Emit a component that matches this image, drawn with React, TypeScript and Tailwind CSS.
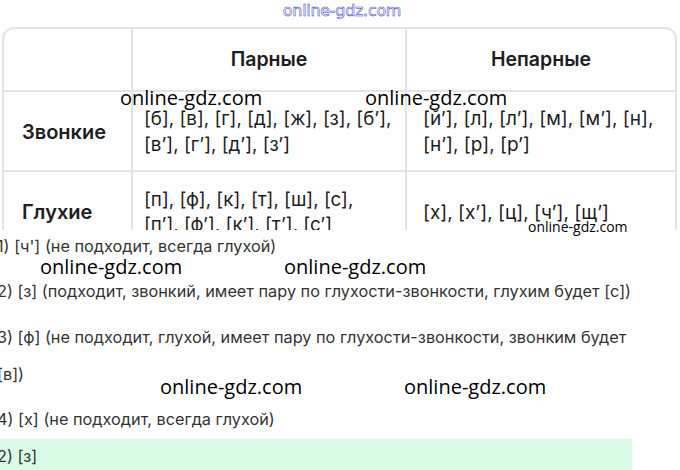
// @ts-nocheck
import React from "react";

const wm = "absolute text-black leading-none font-['Open_Sans',sans-serif] whitespace-nowrap";

const App = () => {
  const cell = "border-[#e4e4e4] flex items-center";
  return (
    <div className="relative w-[680px] h-[470px] bg-white overflow-hidden font-['Inter',sans-serif]">
      <div className="h-[27px] flex justify-center pt-[3px]">
        <span className="text-[16px] leading-[16px] text-transparent [-webkit-text-stroke:0.5px_#3535c8] font-['DejaVu_Sans',sans-serif] tracking-[-0.3px] ml-[4px]">online-gdz.com</span>
      </div>

      <div className="h-[203px] overflow-hidden px-[2px]">
        <div className="w-[675px] border-2 border-[#e4e4e4] rounded-[12px] grid grid-cols-[129px_274px_1fr] text-[#1d1d1f]">
          <div className={`${cell} h-[63px] border-r-2 border-b-2`}></div>
          <div className={`${cell} h-[63px] border-r-2 border-b-2 justify-center text-[19.5px] font-semibold`}>Парные</div>
          <div className={`${cell} h-[63px] border-b-2 justify-center text-[19.5px] font-semibold`}>Непарные</div>

          <div className={`${cell} h-[80px] border-r-2 border-b-2 pl-[18px] pt-[2px] text-[20px] font-semibold`}>Звонкие</div>
          <div className={`${cell} h-[80px] border-r-2 border-b-2 pl-[11px] pt-[2px] text-[18.8px] leading-[26px]`}>[б], [в], [г], [д], [ж], [з], [б’],<br />[в’], [г’], [д’], [з’]</div>
          <div className={`${cell} h-[80px] border-b-2 pl-[16px] pt-[2px] text-[19px] leading-[26px]`}>[й’], [л], [л’], [м], [м’], [н],<br />[н’], [р], [р’]</div>

          <div className={`${cell} h-[80px] border-r-2 pl-[18px] text-[20px] font-semibold`}>Глухие</div>
          <div className={`${cell} h-[80px] border-r-2 pl-[11px] text-[18.8px] leading-[25px]`}>[п], [ф], [к], [т], [ш], [с],<br />[п’], [ф’], [к’], [т’], [с’]</div>
          <div className={`${cell} h-[80px] pl-[16px] text-[19px] leading-[25px]`}>[х], [х’], [ц], [ч’], [щ’]</div>
        </div>
      </div>

      <div className="text-[16.3px] text-[#333] -ml-[3px]">
        <div className="h-[32px] flex items-center">1) [ч'] (не подходит, всегда глухой)</div>
        <div className="h-[46px] flex items-end pb-[5px]">2) [з] (подходит, звонкий, имеет пару по глухости-звонкости, глухим будет [с])</div>
        <div className="h-[46px] flex items-end pb-[5px]">3) [ф] (не подходит, глухой, имеет пару по глухости-звонкости, звонким будет</div>
        <div className="h-[37px] flex items-end pb-[5px]">[в])</div>
        <div className="h-[45px] flex items-end pb-[5px]">4) [х] (не подходит, всегда глухой)</div>
        <div className="w-[635px] h-[34px] mt-[3px] bg-[#dafce7] flex items-center">2) [з]</div>
      </div>

      <span className={`${wm} left-[120px] top-[88px] text-[20px]`}>online-gdz.com</span>
      <span className={`${wm} left-[365px] top-[88px] text-[20px]`}>online-gdz.com</span>
      <span className={`${wm} left-[528px] top-[220px] text-[14px]`}>online-gdz.com</span>
      <span className={`${wm} left-[40px] top-[257px] text-[20px]`}>online-gdz.com</span>
      <span className={`${wm} left-[284px] top-[257px] text-[20px]`}>online-gdz.com</span>
      <span className={`${wm} left-[160px] top-[377px] text-[20px]`}>online-gdz.com</span>
      <span className={`${wm} left-[404px] top-[377px] text-[20px]`}>online-gdz.com</span>
    </div>
  );
};

export default App;
